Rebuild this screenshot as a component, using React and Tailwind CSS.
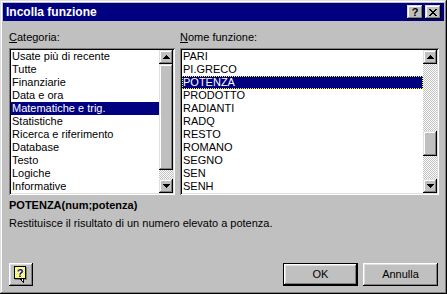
import React from "react";

const raised =
  "shadow-[inset_-1px_-1px_#000,inset_1px_1px_#dfdfdf,inset_-2px_-2px_#808080,inset_2px_2px_#fff]";
const btnRaised =
  "shadow-[inset_-1px_-1px_#000,inset_1px_1px_#fff,inset_-2px_-2px_#808080,inset_2px_2px_#dfdfdf]";
const sunken =
  "shadow-[inset_1px_1px_#808080,inset_-1px_-1px_#fff,inset_2px_2px_#000,inset_-2px_-2px_#dfdfdf]";
const dither =
  "bg-[image:repeating-conic-gradient(#c0c0c0_0_25%,#ffffff_0_50%)] bg-[length:2px_2px]";

function Arrow({ down }) {
  return (
    <svg width="7" height="4" viewBox="0 0 7 4" shapeRendering="crispEdges">
      {down ? (
        <polygon points="0,0 7,0 3.5,4" fill="#000" />
      ) : (
        <polygon points="3.5,0 7,4 0,4" fill="#000" />
      )}
    </svg>
  );
}

function ScrollBtn({ down }) {
  return (
    <div className={`h-[14px] w-[14px] bg-[#c0c0c0] flex items-center justify-center ${raised}`}>
      <Arrow down={down} />
    </div>
  );
}

const categories = [
  "Usate più di recente",
  "Tutte",
  "Finanziarie",
  "Data e ora",
  "Matematiche e trig.",
  "Statistiche",
  "Ricerca e riferimento",
  "Database",
  "Testo",
  "Logiche",
  "Informative",
];

const functions = [
  "PARI",
  "PI.GRECO",
  "POTENZA",
  "PRODOTTO",
  "RADIANTI",
  "RADQ",
  "RESTO",
  "ROMANO",
  "SEGNO",
  "SEN",
  "SENH",
];

function HelpIcon() {
  return (
    <svg width="14" height="18" viewBox="0 0 14 18" shapeRendering="crispEdges">
      <defs>
        <pattern id="chk" width="2" height="2" patternUnits="userSpaceOnUse">
          <rect width="2" height="2" fill="#ffffff" />
          <rect width="1" height="1" fill="#ffff00" />
          <rect x="1" y="1" width="1" height="1" fill="#ffff00" />
        </pattern>
      </defs>
      <rect x="1" y="1" width="12" height="13" fill="#808080" />
      <rect x="0.5" y="0.5" width="11" height="12" fill="url(#chk)" stroke="#000" />
      <polygon points="6,12.5 9.5,16.5 9.5,12.5" fill="#ffffff" stroke="#000" />
      <text
        x="6"
        y="10.5"
        textAnchor="middle"
        fontSize="11"
        fontWeight="bold"
        fill="#0000c0"
        fontFamily="'Liberation Sans', Arial, sans-serif"
      >
        ?
      </text>
    </svg>
  );
}

export default function App() {
  return (
    <div
      className={`w-[447px] h-[294px] bg-[#c0c0c0] p-[3px] flex flex-col text-[11px] text-black font-['Liberation_Sans',Arial,sans-serif] ${raised}`}
    >
      {/* Title bar */}
      <div className="h-[18px] shrink-0 bg-[#000080] flex items-center pl-[3px] pr-[3px]">
        <span className="flex-1 text-white font-bold text-[12px] leading-[18px]">
          Incolla funzione
        </span>
        <div className="flex gap-[2px]">
          <div
            className={`w-[16px] h-[14px] bg-[#c0c0c0] flex items-center justify-center font-bold text-[11px] leading-[14px] ${raised}`}
          >
            ?
          </div>
          <div className={`w-[16px] h-[14px] bg-[#c0c0c0] flex items-center justify-center ${raised}`}>
            <svg width="8" height="7" viewBox="0 0 8 7" shapeRendering="crispEdges">
              <path d="M0 0h2v1h-2zM6 0h2v1h-2zM1 1h2v1h-2zM5 1h2v1h-2zM2 2h4v1h-4zM3 3h2v1h-2zM2 4h4v1h-4zM1 5h2v1h-2zM5 5h2v1h-2zM0 6h2v1h-2zM6 6h2v1h-2z" fill="#000" />
            </svg>
          </div>
        </div>
      </div>

      {/* Content */}
      <div className="flex-1 flex flex-col px-[6px]">
        <div className="flex gap-[5px] mt-[10px]">
          {/* Categoria */}
          <div className="w-[166px] shrink-0 flex flex-col">
            <div className="h-[13px] leading-[13px] mb-[4px]">
              <u>C</u>ategoria:
            </div>
            <div className={`h-[147px] p-[2px] bg-white flex ${sunken}`}>
              <div className="flex-1 flex flex-col">
                {categories.map((c) => (
                  <div
                    key={c}
                    className={
                      c === "Matematiche e trig."
                        ? "h-[13px] leading-[13px] pl-[1px] whitespace-nowrap bg-[#000080] text-white"
                        : "h-[13px] leading-[13px] pl-[1px] whitespace-nowrap"
                    }
                  >
                    {c}
                  </div>
                ))}
              </div>
              <div className="w-[14px] flex flex-col">
                <ScrollBtn />
                <div className={`h-[106px] bg-[#c0c0c0] ${raised}`} />
                <div className={`h-[9px] ${dither}`} />
                <ScrollBtn down />
              </div>
            </div>
          </div>

          {/* Nome funzione */}
          <div className="w-[259px] shrink-0 flex flex-col">
            <div className="h-[13px] leading-[13px] mb-[4px]">
              <u>N</u>ome funzione:
            </div>
            <div className={`h-[147px] p-[2px] bg-white flex ${sunken}`}>
              <div className="flex-1 flex flex-col">
                {functions.map((f) => (
                  <div
                    key={f}
                    className={
                      f === "POTENZA"
                        ? "h-[13px] leading-[13px] pl-[1px] whitespace-nowrap bg-[#000080] text-white outline-1 outline-dotted outline-[#ffff00] -outline-offset-1"
                        : "h-[13px] leading-[13px] pl-[1px] whitespace-nowrap"
                    }
                  >
                    {f}
                  </div>
                ))}
              </div>
              <div className="w-[14px] flex flex-col">
                <ScrollBtn />
                <div className={`h-[67px] ${dither}`} />
                <div className={`h-[25px] bg-[#c0c0c0] ${raised}`} />
                <div className={`h-[23px] ${dither}`} />
                <ScrollBtn down />
              </div>
            </div>
          </div>
        </div>

        <div className="mt-[4px] h-[13px] leading-[13px] font-bold">POTENZA(num;potenza)</div>
        <div className="mt-[5px] h-[13px] leading-[13px]">
          Restituisce il risultato di un numero elevato a potenza.
        </div>

        <div className="mt-auto mb-[5px] flex items-end">
          <div className={`w-[24px] h-[23px] bg-[#c0c0c0] flex items-center justify-center ${btnRaised}`}>
            <HelpIcon />
          </div>
          <div className="flex-1" />
          <div className="w-[75px] h-[23px] border border-black">
            <div className={`w-full h-full flex items-center justify-center ${btnRaised}`}>OK</div>
          </div>
          <div
            className={`ml-[5px] w-[75px] h-[23px] flex items-center justify-center ${btnRaised}`}
          >
            Annulla
          </div>
        </div>
      </div>
    </div>
  );
}
